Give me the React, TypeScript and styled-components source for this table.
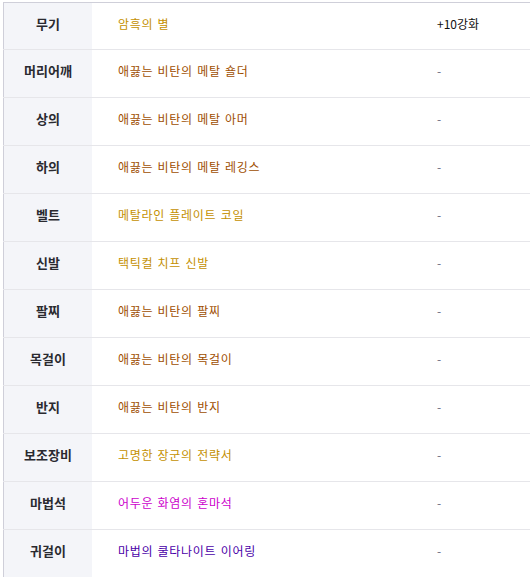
import styled, { createGlobalStyle } from "styled-components"

type Grade = "unique" | "epic" | "relic" | "magic" | "rare"

interface Slot {
  part: string
  name: string
  grade: Grade
  extra: string
}

const slots: Slot[] = [
  { part: "무기", name: "암흑의 별", grade: "unique", extra: "+10강화" },
  { part: "머리어깨", name: "애끓는 비탄의 메탈 숄더", grade: "epic", extra: "-" },
  { part: "상의", name: "애끓는 비탄의 메탈 아머", grade: "epic", extra: "-" },
  { part: "하의", name: "애끓는 비탄의 메탈 레깅스", grade: "epic", extra: "-" },
  { part: "벨트", name: "메탈라인 플레이트 코일", grade: "unique", extra: "-" },
  { part: "신발", name: "택틱컬 치프 신발", grade: "unique", extra: "-" },
  { part: "팔찌", name: "애끓는 비탄의 팔찌", grade: "epic", extra: "-" },
  { part: "목걸이", name: "애끓는 비탄의 목걸이", grade: "epic", extra: "-" },
  { part: "반지", name: "애끓는 비탄의 반지", grade: "epic", extra: "-" },
  { part: "보조장비", name: "고명한 장군의 전략서", grade: "unique", extra: "-" },
  { part: "마법석", name: "어두운 화염의 혼마석", grade: "relic", extra: "-" },
  { part: "귀걸이", name: "마법의 쿨타나이트 이어링", grade: "magic", extra: "-" },
]

const gradeColor: Record<Grade, string> = {
  unique: "#c49000",
  epic: "#9e4e00",
  relic: "#cc00cc",
  magic: "#4a00a8",
  rare: "#0070c0",
}

const GlobalStyle = createGlobalStyle`
  html, body {
    margin: 0;
    background: #fff;
    overflow: hidden;
  }
  body {
    font-family: "Noto Sans CJK KR", "Noto Sans", sans-serif;
  }
`

const Wrap = styled.div`
  padding: 2px 0 0 3px;
`

const Table = styled.table`
  width: 600px;
  border-collapse: collapse;
  border-top: 1px solid #cfcfd9;
  border-left: 1px solid #cfcfd9;
  table-layout: fixed;
`

const Row = styled.tr`
  height: 48px;
  border-bottom: 1px solid #e6e6ea;
  &:first-child {
    height: 47px;
  }
`

const Part = styled.th`
  width: 88px;
  padding: 0 0 6px;
  background: #f4f5f9;
  color: #2a2a30;
  font-size: 13px;
  font-weight: 700;
  text-align: center;
  vertical-align: middle;
`

const Name = styled.td<{ $grade: Grade }>`
  width: 294px;
  padding: 0 0 6px 26px;
  color: ${p => gradeColor[p.$grade]};
  font-size: 12px;
  letter-spacing: 0.7px;
  word-spacing: 1px;
`

const Extra = styled.td<{ $empty: boolean }>`
  padding: 0 0 6px 25px;
  font-size: 12px;
  color: ${p => (p.$empty ? "#6a6a80" : "#111")};
`

export default function App() {
  return (
    <>
      <GlobalStyle />
      <Wrap>
        <Table>
          <tbody>
            {slots.map(s => (
              <Row key={s.part}>
                <Part>{s.part}</Part>
                <Name $grade={s.grade}>{s.name}</Name>
                <Extra $empty={s.extra === "-"}>{s.extra}</Extra>
              </Row>
            ))}
          </tbody>
        </Table>
      </Wrap>
    </>
  )
}
